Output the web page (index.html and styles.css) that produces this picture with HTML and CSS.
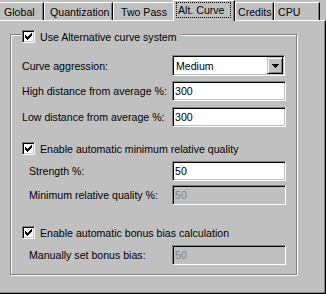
FILE: index.html
```html
<!DOCTYPE html>
<html lang="en">
<head>
<meta charset="utf-8">
<title>Alt. Curve</title>
<link rel="stylesheet" href="styles.css">
</head>
<body>
<div class="tabs">
  <div class="tab t-global">Global</div>
  <div class="tab t-quant">Quantization</div>
  <div class="tab t-two">Two Pass</div>
  <div class="tab active t-alt"><span class="focus">Alt. Curve</span></div>
  <div class="tab t-credits">Credits</div>
  <div class="tab t-cpu">CPU</div>
</div>
<div class="panel">
  <div class="group">
    <div class="legend">
      <span class="check"><svg width="7" height="7" viewBox="0 0 7 7" shape-rendering="crispEdges"><path d="M0 2h1v3H0zM1 3h1v3H1zM2 4h1v3H2zM3 3h1v3H3zM4 2h1v3H4zM5 1h1v3H5zM6 0h1v3H6z" fill="#000"/></svg></span>
      <span>Use Alternative curve system</span>
    </div>

    <div class="row r-aggr">
      <span class="label">Curve aggression:</span>
      <div class="select">
        <span class="value">Medium</span>
        <span class="drop"><svg width="7" height="4" viewBox="0 0 7 4" shape-rendering="crispEdges"><path d="M0 0h7v1H0zM1 1h5v1H1zM2 2h3v1H2zM3 3h1v1H3z" fill="#000"/></svg></span>
      </div>
    </div>
    <div class="row r-high">
      <span class="label">High distance from average %:</span>
      <div class="field">300</div>
    </div>
    <div class="row r-low">
      <span class="label">Low distance from average %:</span>
      <div class="field">300</div>
    </div>

    <div class="check-row r-minq">
      <span class="check"><svg width="7" height="7" viewBox="0 0 7 7" shape-rendering="crispEdges"><path d="M0 2h1v3H0zM1 3h1v3H1zM2 4h1v3H2zM3 3h1v3H3zM4 2h1v3H4zM5 1h1v3H5zM6 0h1v3H6z" fill="#000"/></svg></span>
      <span>Enable automatic minimum relative quality</span>
    </div>
    <div class="row indent r-strength">
      <span class="label">Strength %:</span>
      <div class="field">50</div>
    </div>
    <div class="row indent r-minrel">
      <span class="label">Minimum relative quality %:</span>
      <div class="field disabled">50</div>
    </div>

    <div class="check-row r-bonus">
      <span class="check"><svg width="7" height="7" viewBox="0 0 7 7" shape-rendering="crispEdges"><path d="M0 2h1v3H0zM1 3h1v3H1zM2 4h1v3H2zM3 3h1v3H3zM4 2h1v3H4zM5 1h1v3H5zM6 0h1v3H6z" fill="#000"/></svg></span>
      <span>Enable automatic bonus bias calculation</span>
    </div>
    <div class="row indent r-manual">
      <span class="label">Manually set bonus bias:</span>
      <div class="field disabled">50</div>
    </div>
  </div>
</div>
</body>
</html>
```
FILE: styles.css
```css
* { box-sizing: border-box; }

html, body {
  margin: 0;
  padding: 0;
  background: #c0c0c0;
}

body {
  width: 326px;
  height: 294px;
  overflow: hidden;
  font-family: "Liberation Sans", Arial, sans-serif;
  font-size: 10.6px;
  color: #000;
}

/* ---------- tabs ---------- */
.tabs {
  display: flex;
  align-items: flex-end;
  height: 20px;
  margin-left: -3px;
}

.tab {
  flex: none;
  height: 18px;
  padding-top: 2px;
  line-height: 15px;
  white-space: nowrap;
  background: #c0c0c0;
  border-top: 1px solid #fff;
  border-left: 1px solid #fff;
  border-right: 1px solid #000;
  box-shadow: inset -1px 0 0 #808080;
}

.t-global  { width: 47px; padding-left: 6px; }
.t-quant   { width: 69px; padding-left: 5px; }
.t-two     { width: 62px; padding-left: 7px; }
.t-credits { width: 39px; padding-left: 2px; }
.t-cpu     { width: 46px; padding-left: 3px; }

.tab.active {
  position: relative;
  z-index: 1;
  width: 62px;
  height: 21px;
  margin-left: -2px;
  margin-bottom: -1px;
  padding-left: 2px;
  padding-top: 1px;
}

.focus {
  display: inline-block;
  border: 1px dotted #000;
  padding: 0 5px 0 1px;
  line-height: 14px;
}

/* ---------- panel ---------- */
.panel {
  width: 329px;
  height: 274px;
  margin-left: -3px;
  padding: 13px 0 0 12px;
  border: 1px solid;
  border-color: #fff #000 #000 #fff;
  box-shadow: inset -1px -1px 0 #808080;
}

.group {
  width: 287px;
  height: 241px;
  padding: 0 10px 0 11px;
  border: 1px solid #808080;
  box-shadow: inset 1px 1px 0 #fff, 1px 1px 0 #fff;
}

.legend {
  display: flex;
  align-items: center;
  gap: 5px;
  width: fit-content;
  height: 13px;
  margin: -5px 0 0 -1px;
  padding: 0 4px 0 1px;
  background: #c0c0c0;
  white-space: nowrap;
}

.check {
  flex: none;
  width: 13px;
  height: 13px;
  display: flex;
  align-items: center;
  justify-content: center;
  background: #fff;
  border: 1px solid;
  border-color: #808080 #fff #fff #808080;
  box-shadow: inset 1px 1px 0 #000, inset -1px -1px 0 #c0c0c0;
}

.check svg { display: block; }

.check-row {
  display: flex;
  align-items: center;
  gap: 5px;
  height: 13px;
  white-space: nowrap;
}

.row {
  display: flex;
  align-items: center;
  justify-content: space-between;
  white-space: nowrap;
}

.row.indent { padding-left: 7px; }

.r-aggr     { margin-top: 12px; }
.r-high     { margin-top: 5px; }
.r-low      { margin-top: 6px; }
.r-minq     { margin-top: 15px; }
.r-strength { margin-top: 6px; }
.r-minrel   { margin-top: 4px; }
.r-bonus    { margin-top: 21px; }
.r-manual   { margin-top: 6px; }

.field {
  width: 114px;
  height: 20px;
  display: flex;
  align-items: center;
  padding-left: 2px;
  background: #fff;
  border: 1px solid;
  border-color: #808080 #fff #fff #808080;
  box-shadow: inset 1px 1px 0 #000, inset -1px -1px 0 #c0c0c0;
}

.field.disabled {
  background: #c0c0c0;
  color: #808080;
}

.select {
  width: 113px;
  height: 21px;
  margin-right: 1px;
  display: flex;
  align-items: center;
  padding: 1px;
  background: #fff;
  border: 1px solid;
  border-color: #808080 #fff #fff #808080;
  box-shadow: inset 1px 1px 0 #000, inset -1px -1px 0 #c0c0c0;
}

.select .value {
  flex: 1;
  padding-left: 2px;
}

.drop {
  flex: none;
  width: 16px;
  height: 17px;
  display: flex;
  align-items: center;
  justify-content: center;
  background: #c0c0c0;
  border: 1px solid;
  border-color: #c0c0c0 #000 #000 #c0c0c0;
  box-shadow: inset 1px 1px 0 #fff, inset -1px -1px 0 #808080;
}

.drop svg { display: block; }
```
